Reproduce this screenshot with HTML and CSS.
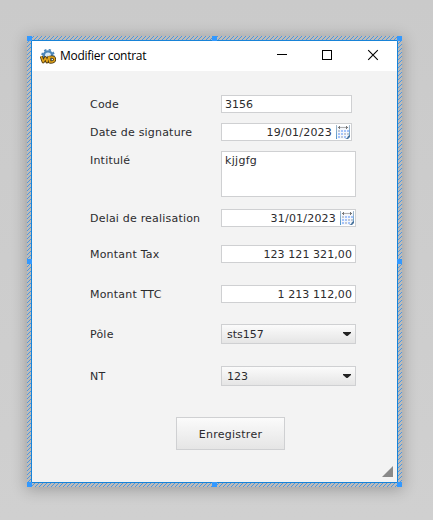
FILE: index.html
```html
<!DOCTYPE html>
<html lang="fr">
<head>
<meta charset="utf-8">
<title>Modifier contrat</title>
<link rel="stylesheet" href="styles.css">
</head>
<body>
<svg class="defs" width="0" height="0" aria-hidden="true">
  <defs>
    <linearGradient id="edge" x1="0" y1="0" x2="0" y2="1">
      <stop offset="0" stop-color="#a9bccb"/><stop offset="1" stop-color="#4f96cd"/>
    </linearGradient>
    <symbol id="calendar" viewBox="0 0 15 16">
      <path d="M1 2h12v10l-3 3H1z" fill="#f4f7fc"/>
      <path d="M0 1h1v14H0zM13 1h1v11h-1z" fill="url(#edge)"/>
      <path d="M3 3.5h9" stroke="#b0b0b0"/>
      <path d="M2 3h1v1H2zM3 2h1v3H3zM11 3h1v1h-1zM10 2h1v3h-1z" fill="#777"/>
      <path d="M5 6h2v2H5zM8 6h2v2H8zM11 6h2v2h-2zM2 9h2v2H2zM5 9h2v2H5zM2 12h2v2H2zM8 12h2v2H8z" fill="#a4c3fa"/>
      <path d="M2 6h2v2H2zM8 9h2v2H8zM11 9h2v2h-2zM5 12h2v2H5z" fill="#c0c8d6"/>
      <path d="M14 11v2l-2 2H9l2-1 1-2z" fill="#48739c"/>
    </symbol>
  </defs>
</svg>
<div class="selection">
  <i class="handle tl"></i><i class="handle tc"></i><i class="handle tr"></i>
  <i class="handle ml"></i><i class="handle mr"></i>
  <i class="handle bl"></i><i class="handle bc"></i><i class="handle br"></i>
  <div class="window">
    <header class="titlebar">
      <svg class="app-icon" width="16" height="16" viewBox="0 0 16 16">
        <circle cx="8" cy="6.6" r="4.2" fill="#d8e8f4" stroke="#4c86b8" stroke-width="2.4"/>
        <circle cx="8" cy="6.6" r="5.9" fill="none" stroke="#4c86b8" stroke-width="1.7" stroke-dasharray="2.3 2.33"/>
        <path d="M1.2 7.2l2 5.6 2.2-4 1.6 4 2.2-5.4M9.6 8.2v4.8c3 .3 5-.6 5-2.6 0-2.2-2-2.8-5-2.2" fill="none" stroke="#4a3710" stroke-width="3.2" stroke-linejoin="round"/>
        <path d="M1.2 7.2l2 5.6 2.2-4 1.6 4 2.2-5.4M9.6 8.2v4.8c3 .3 5-.6 5-2.6 0-2.2-2-2.8-5-2.2" fill="none" stroke="#e2a51c" stroke-width="1.5" stroke-linejoin="round"/>
      </svg>
      <span class="title">Modifier contrat</span>
      <svg class="controls" width="102" height="12" viewBox="0 0 102 12">
        <path d="M0 5.5h10M45.5 1.5h9v9h-9z" fill="none" stroke="#000" shape-rendering="crispEdges"/>
        <path d="M91.2 1.2l9.6 9.6M100.8 1.2l-9.6 9.6" fill="none" stroke="#000" stroke-width="1.1"/>
      </svg>
    </header>
    <main class="form">
      <div class="row code"><span class="label">Code</span><div class="field short">3156</div></div>
      <div class="row signed"><span class="label">Date de signature</span><div class="field short date"><span>19/01/2023</span><svg width="15" height="16"><use href="#calendar"/></svg></div></div>
      <div class="row subject"><span class="label">Intitulé</span><div class="field area">kjjgfg</div></div>
      <div class="row due"><span class="label">Delai de realisation</span><div class="field date"><span>31/01/2023</span><svg width="15" height="16"><use href="#calendar"/></svg></div></div>
      <div class="row tax"><span class="label">Montant Tax</span><div class="field amount">123 121 321,00</div></div>
      <div class="row ttc"><span class="label">Montant TTC</span><div class="field amount">1 213 112,00</div></div>
      <div class="row pole"><span class="label">Pôle</span><div class="field select"><span>sts157</span><svg width="8" height="4"><path d="M0 0h8v1L4.5 4h-1L0 1z" fill="#222"/></svg></div></div>
      <div class="row nt"><span class="label">NT</span><div class="field select"><span>123</span><svg width="8" height="4"><path d="M0 0h8v1L4.5 4h-1L0 1z" fill="#222"/></svg></div></div>
      <button class="save">Enregistrer</button>
    </main>
    <svg class="grip" width="11" height="11"><path d="M11 0v11H0z" fill="#898989"/></svg>
  </div>
</div>
</body>
</html>
```
FILE: styles.css
```css
* { box-sizing: border-box; }
body {
  margin: 0;
  height: 520px;
  padding: 36px 0 0 27px;
  background: linear-gradient(#cacaca, #d0d0d0);
  font: 11px/16px "DejaVu Sans", sans-serif;
  color: #2b2b2e;
  overflow: hidden;
}
.defs { position: absolute; }
.selection {
  position: relative;
  width: 375px;
  height: 451px;
  padding: 4px;
  background: repeating-linear-gradient(135deg, #bebbb7 0 1.6px, #4a97e4 1.6px 2.828px);
  box-shadow: 0 2px 14px 1px rgba(0, 0, 0, .24);
}
.handle {
  position: absolute;
  z-index: 1;
  width: 5px;
  height: 5px;
  background: #3399ff;
}
.tl, .tc, .tr { top: 0; }
.ml, .mr { top: 223px; }
.bl, .bc, .br { bottom: 0; }
.tl, .ml, .bl { left: 0; }
.tc, .bc { left: 185px; }
.tr, .mr, .br { right: 0; }
.window {
  position: relative;
  height: 443px;
  border: 1px solid #1883d7;
  background: #f3f3f3;
}
.titlebar {
  display: flex;
  height: 30px;
  align-items: center;
  background: #fff;
  padding: 0 18px 0 8px;
  font: 12px/16px "Open Sans", sans-serif;
  color: #000;
}
.app-icon { margin-top: 1px; }
.title { margin-left: 4px; letter-spacing: -.28px; }
.controls { margin: -2px 0 0 auto; }
.form {
  display: flex;
  flex-direction: column;
  padding: 24px 41px 0 58px;
}
.row {
  display: grid;
  grid-template-columns: 131px 135px;
  margin-bottom: 10px;
}
.label { line-height: 20px; height: 18px; letter-spacing: .2px; white-space: nowrap; }
.field {
  height: 18px;
  border: 1px solid #cfd0d2;
  background: #fff;
  padding: 0 3px;
  line-height: 18px;
  white-space: nowrap;
}
.short { width: 131px; }
.date {
  display: flex;
  justify-content: flex-end;
  gap: 4px;
  padding-right: 0;
  letter-spacing: .2px;
}
.area { height: 46px; letter-spacing: .3px; }
.amount { text-align: right; letter-spacing: .08px; }
.subject { margin-bottom: 12px; }
.due { margin-bottom: 18px; }
.tax { margin-bottom: 22px; }
.ttc { margin-bottom: 21px; }
.pole { margin-bottom: 22px; }
.pole .label, .nt .label { line-height: 22px; }
.select {
  display: flex;
  height: 20px;
  align-items: flex-start;
  justify-content: space-between;
  padding: 0 4px 0 5px;
  line-height: 20px;
  background: linear-gradient(#fbfbfb, #e5e5e5);
}
.select svg { margin-top: 7px; }
.nt { margin-bottom: 31px; }
.save {
  width: 109px;
  height: 33px;
  margin-left: 86px;
  padding: 2px 0 0;
  border: 1px solid #cfd0d2;
  background: linear-gradient(#fbfbfb, #e5e5e5);
  color: inherit;
  font: inherit;
  letter-spacing: .25px;
}
.grip { position: absolute; right: 4px; bottom: 5px; }
```
